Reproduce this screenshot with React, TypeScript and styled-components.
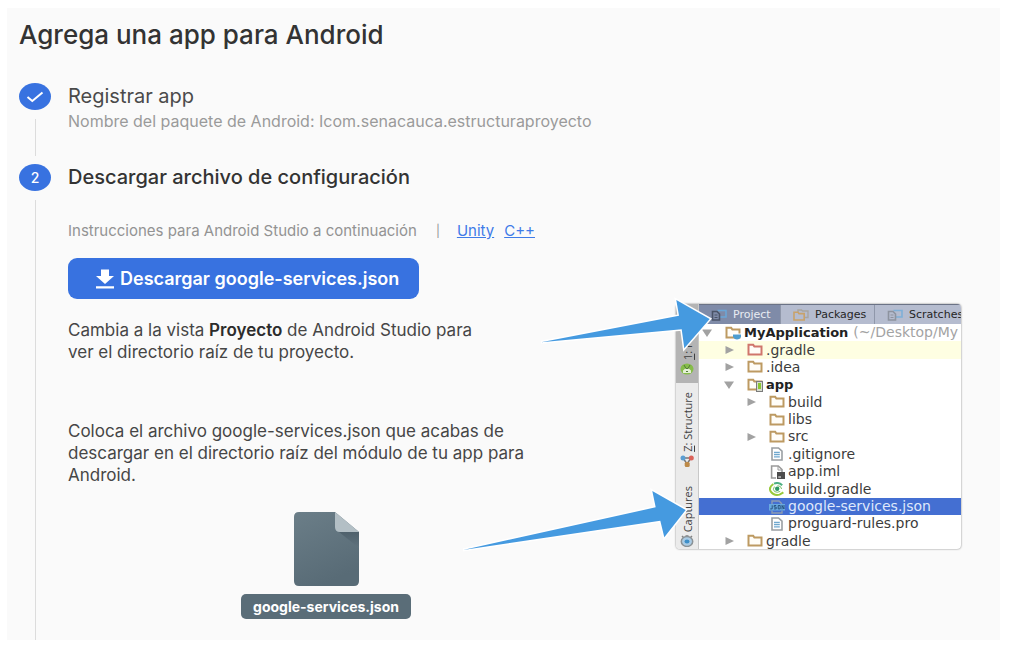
import React from 'react';
import styled, { createGlobalStyle } from 'styled-components';

const GlobalStyle = createGlobalStyle`
  * { box-sizing: border-box; }
  body {
    margin: 0;
    background: #ffffff;
    font-family: Inter, Roboto, sans-serif;
    color: #424242;
  }
  h1, h2, p, ol, ul { margin: 0; padding: 0; font-weight: 400; }
  ol, ul { list-style: none; }
`;

const Panel = styled.main`
  margin: 8px 18px 16px 7px;
  padding: 12px 39px 0 12px;
  background: #fafafa;
`;

const Title = styled.h1`
  margin-bottom: 33px;
  font-size: 26px;
  line-height: 30px;
  font-weight: 500;
  color: #333333;
`;

const Step = styled.li`
  display: grid;
  grid-template-columns: 32px minmax(0, 1fr);
  column-gap: 17px;
`;

const Rail = styled.div`
  display: flex;
  flex-direction: column;
  align-items: center;
`;

const Badge = styled.span`
  display: flex;
  align-items: center;
  justify-content: center;
  width: 32px;
  height: 27px;
  border-radius: 50%;
  background: #3872e0;
  color: #ffffff;
  font-size: 14px;
  font-weight: 500;
`;

const Connector = styled.span<{ $last?: boolean }>`
  flex: 1;
  width: 1px;
  margin: 9px 0 ${p => (p.$last ? 0 : 8)}px;
  background: #dcdcdc;
`;

const StepBody = styled.div<{ $gap: number }>`
  padding-bottom: ${p => p.$gap}px;
`;

const StepTitle = styled.h2<{ $active?: boolean }>`
  font-size: 20px;
  line-height: 27px;
  font-weight: ${p => (p.$active ? 500 : 400)};
  color: ${p => (p.$active ? '#333333' : '#4a4a4a')};
`;

const StepNote = styled.p`
  font-size: 16px;
  line-height: 22px;
  color: #9a9a9a;
`;

const Platforms = styled.p`
  display: flex;
  margin: 30px 0 17px;
  font-size: 15px;
  line-height: 20px;
  color: #939393;
`;

const Divider = styled.span`
  margin: 0 17px 0 19px;
  font-size: 12px;
`;

const PlatformLink = styled.a`
  margin-right: 10px;
  color: #3f7be8;
  text-decoration: underline;
`;

const DownloadButton = styled.button`
  display: flex;
  align-items: center;
  gap: 5px;
  height: 41px;
  padding: 0 20px 0 27px;
  border: 0;
  border-radius: 9px;
  background: #3872e0;
  color: #ffffff;
  font: 600 18px/24px Inter, Roboto, sans-serif;
`;

const Guide = styled.div`
  display: flex;
  justify-content: space-between;
  align-items: flex-start;
`;

const Instructions = styled.div`
  flex: 0 1 516px;
  padding-top: 20px;
`;

const Paragraph = styled.p<{ $gap: number }>`
  max-width: 486px;
  margin-bottom: ${p => p.$gap}px;
  font-size: 17px;
  line-height: 22px;
  color: #464646;

  b { font-weight: 600; color: #2c2c2c; }
`;

const FileFigure = styled.figure`
  display: flex;
  flex-direction: column;
  align-items: center;
  gap: 8px;
  margin: 0;
`;

const FileName = styled.figcaption`
  padding: 0 12px;
  border-radius: 5px;
  background: #5a6d78;
  color: #ffffff;
  font-size: 14px;
  line-height: 25px;
  font-weight: 700;
`;

const Illustration = styled.div`
  position: relative;
  flex: 0 0 285px;
  margin-top: 5px;
`;

const Arrows = styled.svg`
  position: absolute;
  left: -220px;
  top: -10px;
`;

const Ide = styled.div`
  display: grid;
  grid-template-columns: 23px minmax(0, 1fr);
  height: 245px;
  overflow: hidden;
  border-radius: 4px;
  background: #ffffff;
  box-shadow: 0 0 2px rgba(0, 0, 0, 0.55);
  font-family: 'DejaVu Sans', sans-serif;
`;

const ToolStrip = styled.div`
  display: flex;
  flex-direction: column;
  background: #ebebeb;
  border-right: 1px solid #c8c8c8;
`;

const ToolTab = styled.div<{ $size: number; $selected?: boolean }>`
  display: flex;
  flex-direction: column;
  align-items: center;
  justify-content: flex-end;
  gap: 3px;
  flex: 0 0 ${p => p.$size}px;
  padding-bottom: ${p => (p.$selected ? 8 : 0)}px;
  background: ${p => (p.$selected ? '#b4b4b4' : 'transparent')};
  color: #3f3f3f;
  overflow: hidden;
`;

const ToolLabel = styled.span`
  writing-mode: vertical-rl;
  transform: rotate(180deg);
  font: 11px/15px 'Open Sans', sans-serif;
  white-space: nowrap;
`;

const IdeMain = styled.div`
  display: flex;
  flex-direction: column;
  min-width: 0;
`;

const ViewTabs = styled.div`
  display: flex;
  height: 20px;
  background: #b5bccf;
  border-top: 1px solid #6b7386;
`;

const ViewTab = styled.div<{ $size: number; $selected?: boolean }>`
  display: flex;
  align-items: center;
  gap: 6px;
  flex: 0 0 ${p => p.$size}px;
  padding-left: 12px;
  border-right: 1px solid #8f97aa;
  background: ${p => (p.$selected ? '#7f8ba8' : 'transparent')};
  color: ${p => (p.$selected ? '#e8ebf2' : '#262626')};
  font-size: 11px;
  white-space: nowrap;
`;

const Tree = styled.ul`
  display: grid;
  grid-auto-rows: 1fr;
  flex: 0 0 226px;
`;

const TreeRow = styled.li<{ $depth: number; $tone?: 'excluded' | 'selected' }>`
  display: flex;
  align-items: center;
  min-height: 0;
  padding-left: ${p => p.$depth * 22 + 3}px;
  background: ${p => (p.$tone === 'excluded' ? '#fefee2' : p.$tone === 'selected' ? '#446fd2' : 'transparent')};
  color: ${p => (p.$tone === 'selected' ? '#dfe8fb' : '#3c3c3c')};
  font-size: 14px;
  line-height: 17px;
  white-space: nowrap;
`;

const Toggle = styled.span`
  display: flex;
  flex: 0 0 17px;
`;

const Glyph = styled.span`
  display: flex;
  justify-content: center;
  flex: 0 0 16px;
  margin: 0 3px 0 6px;
`;

const ModuleName = styled.b`
  font-size: 13px;
  color: #222222;
`;

const PathHint = styled.span`
  margin-left: 5px;
  color: #a3a3a3;
`;

type IconKind = 'root' | 'red' | 'folder' | 'module' | 'text' | 'iml' | 'gradle' | 'json';

const Folder = ({ color = '#bd9a62' }: { color?: string }) => (
  <path d="M1.5 11.5V1.8H6.2L7.4 3.5H14.5V11.5Z" fill="#fffdf8" stroke={color} strokeWidth="2" />
);

function TreeIcon({ kind }: { kind: IconKind }) {
  return (
    <svg width="16" height="14" viewBox="0 0 16 14" fill="none" aria-hidden="true">
      {(kind === 'folder' || kind === 'root' || kind === 'module') && <Folder />}
      {kind === 'red' && <Folder color="#d0766c" />}
      {kind === 'root' && (
        <g>
          <path d="M8 8H16V10.5Q15 13.5 12 13.5T8 10.5Z" fill="#4e9dd0" />
          <path d="M8 8H16" stroke="#ffffff" />
        </g>
      )}
      {kind === 'module' && (
        <g>
          <rect x="9.5" y="3.5" width="6" height="10" fill="#d7dbd0" stroke="#7b7b7b" />
          <rect x="11" y="5" width="3" height="6" fill="#8bc832" />
        </g>
      )}
      {kind === 'text' && (
        <g>
          <path d="M3 1H9.5L13 4.2V13H3Z" fill="#ffffff" stroke="#9a9fa3" strokeWidth="1.6" />
          <path d="M5 5.5H10.8M5 7.6H10.8M5 9.8H10.8" stroke="#6fa8cf" strokeWidth="1.3" />
        </g>
      )}
      {kind === 'iml' && (
        <g>
          <path d="M7 13H2.6V1H9.3L13 4.5V7" fill="#ffffff" stroke="#9a9a9a" strokeWidth="1.6" />
          <path d="M9 1V5H13" stroke="#9a9a9a" />
          <rect x="8" y="7" width="8" height="7" fill="#4d4d4d" />
          <path d="M9.3 12H12" stroke="#ffffff" />
        </g>
      )}
      {kind === 'gradle' && (
        <g>
          <path d="M5 1.6Q10 -.2 13.2 3.2" stroke="#4fb083" strokeWidth="2" />
          <path d="M4.4 2Q-.6 5 1.6 9.4Q4.8 14 10.6 12.6L14.4 10.4" stroke="#98c93c" strokeWidth="2" />
          <path d="M8.5 3.6Q12.5 4 12.6 7M5.4 4.6Q3.2 7.5 5.6 9.6Q8.4 11 11.2 9.4" stroke="#7fc06a" strokeWidth="1" />
          <circle cx="8.2" cy="6.8" r="2.2" fill="#2e9a62" />
        </g>
      )}
      {kind === 'json' && (
        <g>
          <path d="M3 4V1H10L13 4M3 10.5V13H13V10.5" stroke="#8c9cb3" strokeWidth="1.4" />
          <rect x="0" y="4" width="16" height="6.5" fill="#68a9df" />
          <path d="M3.2 5.3V8.9H1.2M7.2 5.5H5.2V7.1H7.2V8.9H5M9.2 5.5H11.2V8.9H9.2ZM13 9.3V5.4L15 9V5" stroke="#234c78" strokeWidth=".9" />
        </g>
      )}
    </svg>
  );
}

const Caret = ({ open }: { open: boolean }) => (
  <svg width="12" height="10" viewBox="0 0 12 10" aria-hidden="true">
    <path d={open ? 'M0 1.5H10L5 9Z' : 'M1.5 1L10 5L1.5 9Z'} fill="#a2a2a2" />
  </svg>
);

const ViewIcon = ({ front, back }: { front: string; back: string }) => (
  <svg width="16" height="12" viewBox="0 0 16 12" fill="none" aria-hidden="true">
    <path d="M6.5 1.5H15V8H9" stroke={back} strokeWidth="1.6" />
    <path d="M1.5 2.5H6L8.5 5V11H1.5Z" stroke={front} strokeWidth="1.6" />
    <path d="M3.5 6H6.5M3.5 8.5H6.5" stroke={front} />
  </svg>
);

const PackagesIcon = () => (
  <svg width="16" height="12" viewBox="0 0 16 12" fill="none" aria-hidden="true">
    <path d="M5 3V1H8.5L9.5 2H15V8.5H12" stroke="#a9a59f" strokeWidth="1.4" />
    <path d="M1 11V3.2H5L6 4.6H11.2V11Z" stroke="#c9a26a" strokeWidth="1.6" />
  </svg>
);

interface Entry {
  name: string;
  depth: number;
  icon: IconKind;
  open?: boolean;
  bold?: boolean;
  path?: string;
  tone?: 'excluded' | 'selected';
}

const entries: Entry[] = [
  { name: 'MyApplication', depth: 0, icon: 'root', open: true, bold: true, path: '(~/Desktop/My' },
  { name: '.gradle', depth: 1, icon: 'red', open: false, tone: 'excluded' },
  { name: '.idea', depth: 1, icon: 'folder', open: false },
  { name: 'app', depth: 1, icon: 'module', open: true, bold: true },
  { name: 'build', depth: 2, icon: 'folder', open: false },
  { name: 'libs', depth: 2, icon: 'folder' },
  { name: 'src', depth: 2, icon: 'folder', open: false },
  { name: '.gitignore', depth: 2, icon: 'text' },
  { name: 'app.iml', depth: 2, icon: 'iml' },
  { name: 'build.gradle', depth: 2, icon: 'gradle' },
  { name: 'google-services.json', depth: 2, icon: 'json', tone: 'selected' },
  { name: 'proguard-rules.pro', depth: 2, icon: 'text' },
  { name: 'gradle', depth: 1, icon: 'folder', open: false },
];

function ProjectView() {
  return (
    <Illustration>
      <Ide>
        <ToolStrip>
          <ToolTab $size={79} $selected>
            <ToolLabel><u>1</u>: Project</ToolLabel>
            <svg width="14" height="12" viewBox="0 0 14 12" aria-hidden="true">
              <ellipse cx="7" cy="6" rx="6.5" ry="5.5" fill="#86bd49" />
              <path d="M3 10V7.5Q7 3 11 7.5V10Z" fill="#e4f0d6" />
              <path d="M4 2L6 5.5H8L10 2M6 8.5H8" stroke="#53783a" fill="none" />
            </svg>
          </ToolTab>
          <ToolTab $size={84}>
            <ToolLabel><u>Z</u>: Structure</ToolLabel>
            <svg width="14" height="12" viewBox="0 0 14 12" aria-hidden="true">
              <path d="M3 3H11L7 9Z" fill="none" stroke="#777777" strokeWidth="1.5" />
              <circle cx="3" cy="3" r="2.5" fill="#5b9ed2" />
              <circle cx="11.3" cy="3" r="2.5" fill="#db6259" />
              <rect x="4.7" y="7" width="5" height="5" rx="1.5" fill="#bd8a48" />
            </svg>
          </ToolTab>
          <ToolTab $size={80}>
            <ToolLabel>Captures</ToolLabel>
            <svg width="14" height="12" viewBox="0 0 14 12" aria-hidden="true">
              <path d="M2 1L4 3M12 1L10 3M5.5 1H8.5" stroke="#828282" strokeWidth="1.5" />
              <ellipse cx="7" cy="6.5" rx="5.7" ry="5" fill="#aacbe4" stroke="#8b9296" strokeWidth="1.5" />
              <ellipse cx="7" cy="6.5" rx="2.5" ry="2" fill="#3e8fc8" />
            </svg>
          </ToolTab>
        </ToolStrip>
        <IdeMain>
          <ViewTabs>
            <ViewTab $size={82} $selected><ViewIcon front="#4b5468" back="#6ba6d6" />Project</ViewTab>
            <ViewTab $size={94}><PackagesIcon />Packages</ViewTab>
            <ViewTab $size={94}><ViewIcon front="#8d939f" back="#7fb0d8" />Scratches</ViewTab>
          </ViewTabs>
          <Tree>
            {entries.map(e => (
              <TreeRow key={e.name} $depth={e.depth} $tone={e.tone}>
                <Toggle>{e.open !== undefined && <Caret open={e.open} />}</Toggle>
                <Glyph><TreeIcon kind={e.icon} /></Glyph>
                {e.bold ? <ModuleName>{e.name}</ModuleName> : e.name}
                {e.path && <PathHint>{e.path}</PathHint>}
              </TreeRow>
            ))}
          </Tree>
        </IdeMain>
      </Ide>
      <Arrows width="260" height="265" viewBox="0 0 260 265" aria-hidden="true">
        <g fill="#459ae0" stroke="#ffffff" strokeWidth="3" paintOrder="stroke">
          <path d="M85 48.3L223 21.7L220.3 6L253.7 25L228.3 54.3L225.7 35.3Z" />
          <path d="M7 256L199.7 213.3L196.3 197L229.7 216L208.3 243.3L204.3 226.7Z" />
        </g>
      </Arrows>
    </Illustration>
  );
}

export default function App() {
  return (
    <>
      <GlobalStyle />
      <Panel>
        <Title>Agrega una app para Android</Title>
        <ol>
          <Step>
            <Rail>
              <Badge>
                <svg width="18" height="12" viewBox="0 0 18 12" fill="none" aria-label="Completado">
                  <path d="M1.5 6L6.3 10L16.5 1.5" stroke="#ffffff" strokeWidth="2" />
                </svg>
              </Badge>
              <Connector />
            </Rail>
            <StepBody $gap={32}>
              <StepTitle>Registrar app</StepTitle>
              <StepNote>Nombre del paquete de Android: Icom.senacauca.estructuraproyecto</StepNote>
            </StepBody>
          </Step>
          <Step>
            <Rail>
              <Badge>2</Badge>
              <Connector $last />
            </Rail>
            <StepBody $gap={21}>
              <StepTitle $active>Descargar archivo de configuración</StepTitle>
              <Platforms>
                Instrucciones para Android Studio a continuación
                <Divider>|</Divider>
                <PlatformLink href="#unity">Unity</PlatformLink>
                <PlatformLink href="#cpp">C++</PlatformLink>
              </Platforms>
              <DownloadButton type="button">
                <svg width="20" height="20" viewBox="0 0 20 20" fill="#ffffff" aria-hidden="true">
                  <path d="M6 0.5H14V7H19L10 15L1 7H6ZM1 17.3H19V19.5H1Z" />
                </svg>
                Descargar google-services.json
              </DownloadButton>
              <Guide>
                <Instructions>
                  <Paragraph $gap={57}>
                    Cambia a la vista <b>Proyecto</b> de Android Studio para<br />
                    ver el directorio raíz de tu proyecto.
                  </Paragraph>
                  <Paragraph $gap={26}>
                    Coloca el archivo google-services.json que acabas de descargar en el directorio raíz del
                    módulo de tu app para Android.
                  </Paragraph>
                  <FileFigure>
                    <svg width="65" height="74" viewBox="0 0 65 74" aria-hidden="true">
                      <defs>
                        <linearGradient id="sheet" x1="0" y1="0" x2="0.4" y2="1">
                          <stop offset="0" stopColor="#6b7e88" />
                          <stop offset="1" stopColor="#586b76" />
                        </linearGradient>
                        <linearGradient id="foldShade" x1="0" y1="0" x2="0" y2="1">
                          <stop offset="0" stopColor="#4f616c" />
                          <stop offset="1" stopColor="#5f727d" />
                        </linearGradient>
                      </defs>
                      <path d="M5 0H41L65 20V69Q65 74 60 74H5Q0 74 0 69V5Q0 0 5 0Z" fill="url(#sheet)" />
                      <path d="M45 20L65 36V20Z" fill="url(#foldShade)" />
                      <path d="M41 0L65 20H46Q41 20 41 15Z" fill="#b3bfc5" />
                    </svg>
                    <FileName>google-services.json</FileName>
                  </FileFigure>
                </Instructions>
                <ProjectView />
              </Guide>
            </StepBody>
          </Step>
        </ol>
      </Panel>
    </>
  );
}
